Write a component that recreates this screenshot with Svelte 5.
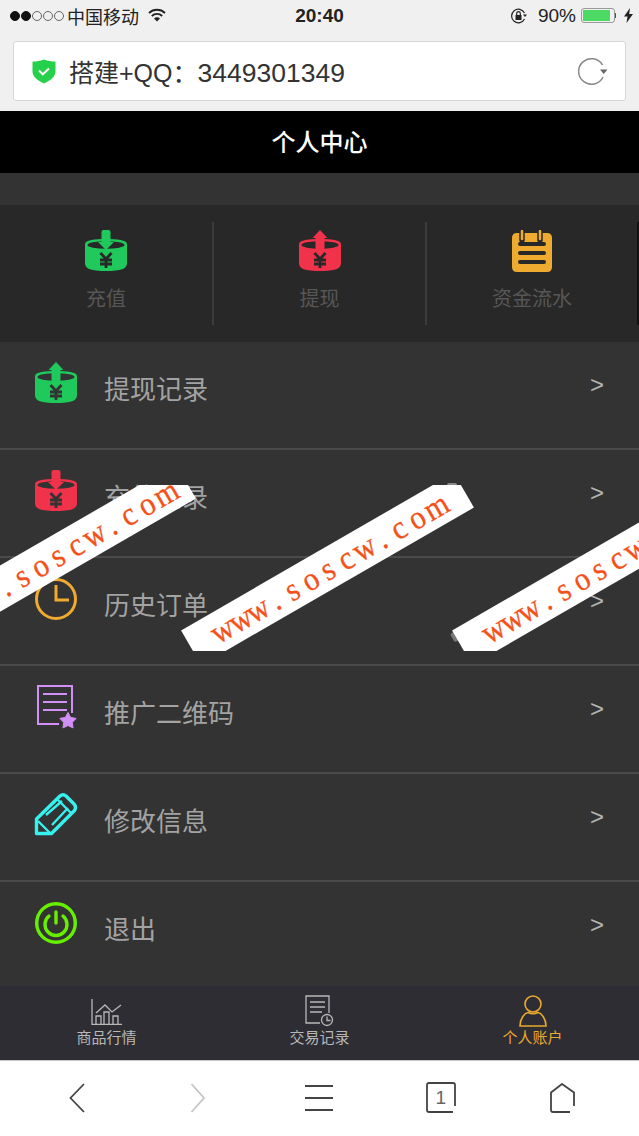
<script>
	const quick = [
		{ label: '充值', kind: 'down', color: '#1fc95c' },
		{ label: '提现', kind: 'up', color: '#f0324a' },
		{ label: '资金流水', kind: 'notes', color: '#eeab2f' }
	];
	const rows = [
		{ label: '提现记录', kind: 'up', color: '#1fc95c' },
		{ label: '充值记录', kind: 'down', color: '#f0324a' },
		{ label: '历史订单', kind: 'clock', color: '#eeab2f' },
		{ label: '推广二维码', kind: 'doc', color: '#d28ff5' },
		{ label: '修改信息', kind: 'pencil', color: '#35f2ee' },
		{ label: '退出', kind: 'power', color: '#66f000' }
	];
	const mark = 'www.soscw.com'.split('');
</script>

{#snippet money(dir, color, bg)}
	<svg class="icon" width="42" height="42" viewBox="0 0 42 42">
		<path d="M0 14C0 10 10 9 21 9s21 1 21 5v19c0 6-6 8-21 8S0 39 0 33z" fill={color} />
		<ellipse cx="21" cy="15" rx="18.500" ry="3.800" fill={bg} />
		{#if dir === 'up'}
			<path d="M21 0l7.500 8H25.500v10q0 1.500-1.500 1.500h-6Q16.500 19.500 16.500 18V8H13.500z" fill={color} />
		{:else}
			<path d="M16.500 2q0-2 2-2h5q2 0 2 2v10h3.500l-8 8-8-8h3.500z" fill={color} />
		{/if}
		<path d="M15.500 23l5.500 6 5.500-6M15 30h12M15 34h12M21 29v9" fill="none" stroke={bg} stroke-width="2.800" />
	</svg>
{/snippet}

{#snippet icon(kind, color, bg)}
	{#if kind === 'up' || kind === 'down'}
		{@render money(kind, color, bg)}
	{:else if kind === 'notes'}
		<svg class="icon" width="42" height="42" viewBox="0 0 42 42">
			<path d="M6 3h30q5 0 5 5v29q0 5-5 5H6q-5 0-5-5V8q0-5 5-5z" fill={color} />
			<path d="M11 2v8M29 2v8" stroke={bg} stroke-width="5.500" stroke-linecap="round" />
			<path d="M11 1v8M29 1v8" stroke={color} stroke-width="2.500" stroke-linecap="round" />
			<path d="M9 14h24M9 23h24M9 32h24" stroke={bg} stroke-width="4" stroke-linecap="round" />
		</svg>
	{:else if kind === 'clock'}
		<svg class="icon" width="42" height="42" viewBox="0 0 42 42" fill="none" stroke={color} stroke-width="3">
			<circle cx="21" cy="21" r="19.500" />
			<path d="M21 7v15h13" />
		</svg>
	{:else if kind === 'doc'}
		<svg class="icon free" width="42" height="44" viewBox="0 0 42 44" fill="none" stroke={color} stroke-width="2">
			<path d="M24 38H3V0h34v27" />
			<path d="M8 8h24M8 16h24M8 24h24" />
			<path d="M33 26.500l2.600 4.900 5.500 1-3.800 4 .7 5.500-5-2.400-5 2.400.7-5.500-3.800-4 5.500-1z" fill={color} stroke={color} stroke-width="1" stroke-linejoin="round" />
		</svg>
	{:else if kind === 'pencil'}
		<svg class="icon free" width="42" height="44" viewBox="0 0 42 44" fill="none" stroke={color} stroke-width="3.400" stroke-linejoin="round">
			<path d="M1.500 25L25 2q3-2.500 6 0l8.500 8.500q2 3 0 6L16.500 39.500h-15z" />
			<path d="M22 5l15 15M3 27l12 12M11 21L27 7M17 31L33 14" stroke-width="2.400" />
		</svg>
	{:else if kind === 'power'}
		<svg class="icon" width="42" height="42" viewBox="0 0 42 42" fill="none" stroke={color} stroke-width="3.400">
			<circle cx="21" cy="21" r="19.300" />
			<path d="M14 14a11 11 0 1 0 14 0M21 10v11" stroke-linecap="round" />
		</svg>
	{/if}
{/snippet}

<div class="screen">
	<div class="browser-top">
		<div class="status">
			<div class="signal">
				<i class="on"></i><i class="on"></i><i></i><i></i><i></i>
			</div>
			<span class="carrier">中国移动</span>
			<svg class="wifi" width="18" height="14" viewBox="0 0 18 14" fill="none" stroke="#222" stroke-width="1.800">
				<path d="M1 5a11.500 11.500 0 0 1 16 0M3.800 8a7.500 7.500 0 0 1 10.400 0" />
				<path d="M6 10.500a4 4 0 0 1 6 0L9 13.500z" fill="#222" stroke="none" />
			</svg>
			<span class="time">20:40</span>
			<svg class="lock" width="18" height="16" viewBox="0 0 18 16" fill="none" stroke="#222" stroke-width="1.200">
				<path d="M14.500 11a6.800 6.800 0 1 1 0-6" />
				<path d="M13 6.500h4l-2 2.500z" fill="#222" stroke="none" />
				<path d="M5.500 7h6v5h-6z" fill="#222" stroke="none" />
				<path d="M6.700 7V5.500a1.800 1.800 0 0 1 3.600 0V7" />
			</svg>
			<span class="pct">90%</span>
			<div class="battery"><div class="level" style="width: 90%"></div></div>
			<i class="nub"></i>
			<svg width="9" height="15" viewBox="0 0 9 15"><path d="M6 0L0 8.500h3.500L2.500 15 9 6H5.200z" fill="#222" /></svg>
		</div>
		<div class="address">
			<svg width="24" height="25" viewBox="0 0 24 25">
				<path d="M12 .5c4 1.500 7 2 11.500 2v10c0 5-5 9-11.500 12C5.500 21.500.5 17.500.5 12.500v-10C5 2.500 8 2 12 .5z" fill="#25d04a" />
				<path d="M7 11.500l3.800 3.800L17 9.500" fill="none" stroke="#fff" stroke-width="2" />
			</svg>
			<span class="url">搭建+QQ：<span class="num">3449301349</span></span>
			<svg class="reload" width="30" height="28" viewBox="0 0 30 28" fill="none" stroke="#888" stroke-width="1.500">
				<path d="M24.500 8A12.800 12.800 0 1 0 25 20" />
				<path d="M22 12.500h7.500L25.700 17z" fill="#666" stroke="none" />
			</svg>
		</div>
	</div>

	<header class="title">个人中心</header>

	<section class="quick">
		{#each quick as item}
			<div class="cell">
				{@render icon(item.kind, item.color, '#282828')}
				<span>{item.label}</span>
			</div>
		{/each}
	</section>

	<ul class="list">
		{#each rows as row}
			<li class="row">
				<div class="row-icon">{@render icon(row.kind, row.color, '#333')}</div>
				<span class="row-label">{row.label}</span>
				<span class="chevron">&gt;</span>
			</li>
		{/each}
	</ul>

	<nav class="tabs">
		<div class="tab">
			<svg class="chart" width="32" height="26" viewBox="0 0 32 26" fill="none" stroke="currentColor" stroke-width="1.300">
				<path d="M1 0v25.500h30" />
				<path d="M5 14L14 6l7 7 9-7" />
				<path d="M5 25.500V17h5v8.500M13 25.500V13h5v12.500M22 25.500V17h5v8.500" />
			</svg>
			<span>商品行情</span>
		</div>
		<div class="tab">
			<svg width="29" height="32" viewBox="0 0 29 32" fill="none" stroke="currentColor" stroke-width="1.300">
				<path d="M15 28H1V1h23v17" />
				<path d="M5 7h15M5 12h15M5 17h12" />
				<circle cx="22" cy="25" r="5.500" />
				<path d="M22 21.500V25.500h3.500" />
			</svg>
			<span>交易记录</span>
		</div>
		<div class="tab active">
			<svg width="28" height="32" viewBox="0 0 28 32" fill="none" stroke="currentColor" stroke-width="1.600">
				<circle cx="14" cy="9" r="8" />
				<path d="M1 31c0-8 5-13 8-13.500 3 1.500 7 1.500 10 0 3 .5 8 5.500 8 13.500z" />
			</svg>
			<span>个人账户</span>
		</div>
	</nav>

	<nav class="browser-nav">
		<svg width="16" height="30" viewBox="0 0 16 30" fill="none" stroke="#444" stroke-width="1.800"><path d="M15 1L1.500 15 15 29" /></svg>
		<svg width="16" height="30" viewBox="0 0 16 30" fill="none" stroke="#c4c4c4" stroke-width="1.800"><path d="M1.500 1L14 15 1.500 29" /></svg>
		<svg width="28" height="28" viewBox="0 0 28 28" fill="none" stroke="#444" stroke-width="1.800"><path d="M0 2h28M0 14h28M0 26h28" /></svg>
		<div class="tabs-count">
			<svg width="30" height="31" viewBox="0 0 30 31" fill="none" stroke="#444" stroke-width="1.800"><path d="M29 24V3q0-2-2-2H3Q1 1 1 3v25q0 2 2 2h24" /></svg>
			<span>1</span>
		</div>
		<svg width="26" height="30" viewBox="0 0 26 30" fill="none" stroke="#444" stroke-width="1.800"><path d="M21 29H4q-2 0-2-2V9.500L13 1l12 8.500V23" /></svg>
	</nav>

	<i class="smudge top"></i>
	<i class="smudge low"></i>
	<div class="watermarks" aria-hidden="true">
		{#each ['b1', 'b2', 'b3'] as b}
			<div class="banner {b}">
				{#each mark as c}<span>{c}</span>{/each}
			</div>
		{/each}
	</div>
</div>

<style>
	:global(body) {
		margin: 0;
	}

	.screen {
		position: relative;
		width: 639px;
		height: 1136px;
		overflow: hidden;
		display: flex;
		flex-direction: column;
		background: #333;
		font-family: "Noto Sans CJK SC", "Noto Sans", sans-serif;
	}

	.browser-top {
		height: 111px;
		box-sizing: border-box;
		padding: 0 13px;
		background: #f0f0f0;
		flex: none;
	}

	.status {
		height: 41px;
		margin-left: -3px;
		margin-right: -7px;
		padding-bottom: 10px;
		box-sizing: border-box;
		display: flex;
		align-items: center;
		color: #222;
		font-size: 18px;
	}

	.signal {
		display: flex;
		gap: 1px;
	}

	.signal i {
		width: 8px;
		height: 8px;
		border: 1px solid #666;
		border-radius: 50%;
	}

	.signal i.on {
		background: #111;
		border-color: #111;
	}

	.carrier {
		margin: 0 9px 0 3px;
	}

	.wifi {
		margin-bottom: 1px;
	}

	.time {
		position: absolute;
		left: 0;
		right: 0;
		margin-top: 1px;
		text-align: center;
		font-family: "Liberation Sans", sans-serif;
		font-weight: 700;
		font-size: 19px;
	}

	.lock {
		margin-left: auto;
		margin-right: 10px;
	}

	.pct {
		font-family: "Liberation Sans", sans-serif;
		font-size: 19px;
		margin-right: 5px;
	}

	.battery {
		width: 34px;
		height: 15px;
		box-sizing: border-box;
		border: 1px solid #999;
		border-radius: 3px;
		padding: 1px;
	}

	.level {
		height: 100%;
		background: #4cd964;
	}

	.nub {
		width: 1px;
		height: 5px;
		background: #555;
		margin-right: 8px;
	}

	.address {
		height: 60px;
		box-sizing: border-box;
		background: #fff;
		border: 1px solid #d6d6d6;
		border-radius: 3px;
		display: flex;
		align-items: center;
		padding: 0 17px 0 18px;
	}

	.url {
		margin-left: 13px;
		font-family: "Liberation Sans", "Noto Sans CJK SC", sans-serif;
		font-size: 25px;
		color: #333;
	}

	.num {
		font-size: 26.500px;
	}

	.reload {
		margin-left: auto;
	}

	.title {
		height: 62px;
		flex: none;
		margin-bottom: 32px;
		background: #000;
		color: #fff;
		font-size: 24px;
		font-weight: 500;
		text-align: center;
		line-height: 60px;
	}

	.quick {
		height: 137px;
		flex: none;
		display: grid;
		grid-template-columns: 214px 213px 212px;
		align-items: center;
		background: #282828;
	}

	.cell {
		height: 103px;
		box-sizing: border-box;
		border-right: 2px solid #3c3c3c;
		display: flex;
		flex-direction: column;
		align-items: center;
		padding-top: 8px;
		color: #575757;
		font-size: 20px;
	}

	.cell span {
		line-height: 28px;
		margin-top: 12px;
	}

	.cell:last-child {
		border-right-color: #111;
	}

	.list {
		list-style: none;
		margin: 0;
		padding: 0;
		flex: 1;
	}

	.row {
		height: 108px;
		box-sizing: border-box;
		border-bottom: 2px solid #4b4b4b;
		display: flex;
		align-items: flex-start;
		padding: 20px 35px 0 35px;
	}

	.row:last-child {
		border-bottom: 0;
		height: 104px;
	}

	.row-icon {
		width: 69px;
		flex: none;
	}

	.icon {
		display: block;
	}

	.icon.free {
		overflow: visible;
	}

	.row-label {
		font-size: 26px;
		line-height: 52px;
		color: #a3a3a3;
	}

	.chevron {
		margin-left: auto;
		font-family: "Liberation Sans", sans-serif;
		font-size: 24px;
		line-height: 45px;
		color: #b4b4b4;
	}

	.tabs {
		height: 75px;
		flex: none;
		box-sizing: border-box;
		border-bottom: 1px solid #c8c8c8;
		background: #2d2d33;
		display: grid;
		grid-template-columns: repeat(3, 1fr);
	}

	.tab {
		display: flex;
		flex-direction: column;
		align-items: center;
		justify-content: flex-end;
		padding-bottom: 13px;
		color: #b8b8b8;
		font-size: 15px;
		line-height: 20px;
	}

	.tab .chart {
		margin-bottom: 2px;
	}

	.tab.active {
		color: #e9a92f;
	}

	.browser-nav {
		height: 75px;
		flex: none;
		background: #fff;
		display: grid;
		grid-template-columns: repeat(5, 1fr);
		align-items: center;
		justify-items: center;
		padding: 0 16px 2px;
		box-sizing: border-box;
	}

	.tabs-count {
		position: relative;
		width: 30px;
		height: 31px;
	}

	.tabs-count span {
		position: absolute;
		inset: 0;
		text-align: center;
		font-family: "Liberation Sans", sans-serif;
		font-size: 19px;
		line-height: 31px;
		color: #666;
	}

	.watermarks {
		position: absolute;
		top: 485px;
		left: 0;
		width: 639px;
		height: 166px;
		overflow: hidden;
	}

	.banner {
		position: absolute;
		top: 63.5px;
		width: 315px;
		height: 40px;
		background: #fff;
		transform: rotate(-30deg);
		display: flex;
		justify-content: center;
		align-items: center;
		color: #f4511a;
		font-family: "Liberation Serif", serif;
		font-size: 33px;
		-webkit-text-stroke: 0.3px #f4511a;
	}

	.banner span {
		width: 20.5px;
		flex: none;
		text-align: center;
		transform: scaleX(0.92);
	}

	.b1 {
		left: -108px;
		top: 55px;
		padding-left: 18px;
		box-sizing: border-box;
	}

	.b2 {
		left: 170px;
	}

	.b3 {
		left: 441px;
	}

	.smudge {
		position: absolute;
		width: 10px;
		background: #8a8a8a;
	}

	.smudge.top {
		left: 447px;
		top: 483px;
		height: 2px;
		border-radius: 5px 5px 0 0;
	}

	.smudge.low {
		left: 452px;
		top: 632px;
		width: 5px;
		height: 10px;
		border-radius: 3px;
		transform: rotate(-30deg);
		background: #777;
	}
</style>
